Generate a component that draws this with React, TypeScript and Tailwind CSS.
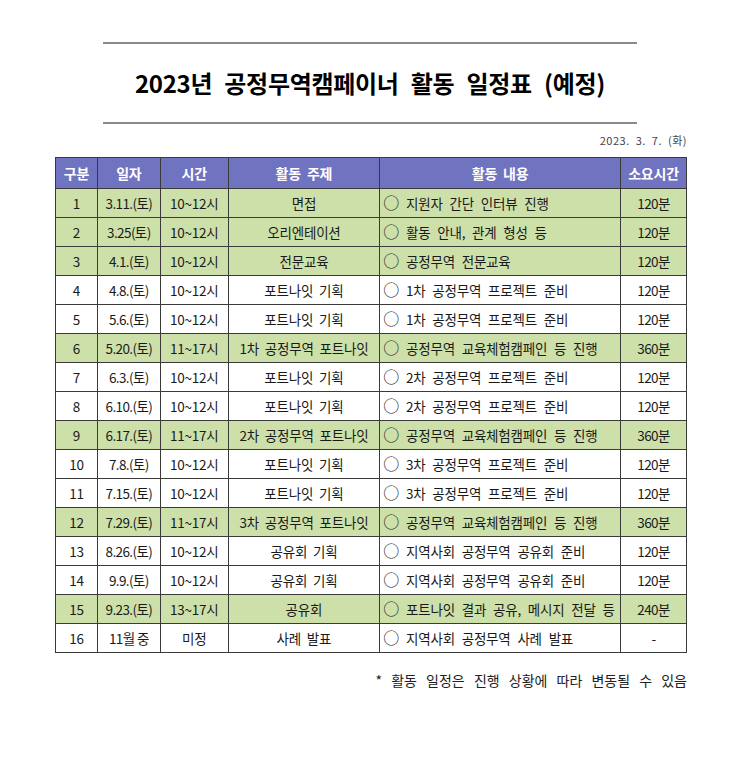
const rows: { no: number; date: string; time: string; topic: string; content: string; dur: string; hl?: boolean }[] = [
  { no: 1, date: "3.11.(토)", time: "10~12시", topic: "면접", content: "지원자 간단 인터뷰 진행", dur: "120분", hl: true },
  { no: 2, date: "3.25(토)", time: "10~12시", topic: "오리엔테이션", content: "활동 안내, 관계 형성 등", dur: "120분", hl: true },
  { no: 3, date: "4.1.(토)", time: "10~12시", topic: "전문교육", content: "공정무역 전문교육", dur: "120분", hl: true },
  { no: 4, date: "4.8.(토)", time: "10~12시", topic: "포트나잇 기획", content: "1차 공정무역 프로젝트 준비", dur: "120분" },
  { no: 5, date: "5.6.(토)", time: "10~12시", topic: "포트나잇 기획", content: "1차 공정무역 프로젝트 준비", dur: "120분" },
  { no: 6, date: "5.20.(토)", time: "11~17시", topic: "1차 공정무역 포트나잇", content: "공정무역 교육체험캠페인 등 진행", dur: "360분", hl: true },
  { no: 7, date: "6.3.(토)", time: "10~12시", topic: "포트나잇 기획", content: "2차 공정무역 프로젝트 준비", dur: "120분" },
  { no: 8, date: "6.10.(토)", time: "10~12시", topic: "포트나잇 기획", content: "2차 공정무역 프로젝트 준비", dur: "120분" },
  { no: 9, date: "6.17.(토)", time: "11~17시", topic: "2차 공정무역 포트나잇", content: "공정무역 교육체험캠페인 등 진행", dur: "360분", hl: true },
  { no: 10, date: "7.8.(토)", time: "10~12시", topic: "포트나잇 기획", content: "3차 공정무역 프로젝트 준비", dur: "120분" },
  { no: 11, date: "7.15.(토)", time: "10~12시", topic: "포트나잇 기획", content: "3차 공정무역 프로젝트 준비", dur: "120분" },
  { no: 12, date: "7.29.(토)", time: "11~17시", topic: "3차 공정무역 포트나잇", content: "공정무역 교육체험캠페인 등 진행", dur: "360분", hl: true },
  { no: 13, date: "8.26.(토)", time: "10~12시", topic: "공유회 기획", content: "지역사회 공정무역 공유회 준비", dur: "120분" },
  { no: 14, date: "9.9.(토)", time: "10~12시", topic: "공유회 기획", content: "지역사회 공정무역 공유회 준비", dur: "120분" },
  { no: 15, date: "9.23.(토)", time: "13~17시", topic: "공유회", content: "포트나잇 결과 공유, 메시지 전달 등", dur: "240분", hl: true },
  { no: 16, date: "11월 중", time: "미정", topic: "사례 발표", content: "지역사회 공정무역 사례 발표", dur: "-" },
];

const font = { fontFamily: '"Noto Sans CJK KR", "Noto Sans", sans-serif' };

export default function App() {
  return (
    <div className="w-[740px] h-[760px] bg-white text-[#111]" style={font}>
      {/* title block */}
      <div className="pt-[42px] px-[103px]">
        <div className="h-[2px] bg-[#8a8a8a]" />
        <h1 className="h-[78px] flex items-center justify-center text-[24px] font-bold tracking-[-0.3px] [word-spacing:7px] text-black">
          2023년 공정무역캠페이너 활동 일정표 (예정)
        </h1>
        <div className="h-[2px] bg-[#8a8a8a]" />
      </div>

      <div className="px-[53px]">
        <div className="h-[33px] flex items-center justify-end text-[11px] text-[#444] tracking-[0.5px] [word-spacing:3px]">
          2023. 3. 7. (화)
        </div>

        <table className="w-[632px] ml-[2px] border-collapse text-[13.5px] tracking-[-0.2px] text-[#1a1a1a]">
          <colgroup>
            <col className="w-[42px]" />
            <col className="w-[63px]" />
            <col className="w-[68px]" />
            <col className="w-[152px]" />
            <col className="w-[241px]" />
            <col className="w-[66px]" />
          </colgroup>
          <thead>
            <tr className="h-[31px] bg-[#7073bf] text-white text-[14px] font-bold">
              {["구분", "일자", "시간", "활동 주제", "활동 내용", "소요시간"].map((h) => (
                <th key={h} className="border border-[#3a3a3a] font-bold [word-spacing:3px]">
                  {h}
                </th>
              ))}
            </tr>
          </thead>
          <tbody>
            {rows.map((r) => (
              <tr key={r.no} className={`h-[29px] ${r.hl ? "bg-[#cde0a9]" : "bg-white"}`}>
                <td className="border border-[#3a3a3a] text-center">{r.no}</td>
                <td className="border border-[#3a3a3a] text-center tracking-[-0.6px]">{r.date}</td>
                <td className="border border-[#3a3a3a] text-center">{r.time}</td>
                <td className="border border-[#3a3a3a] text-center [word-spacing:3px]">{r.topic}</td>
                <td className="border border-[#3a3a3a] pl-[3px] [word-spacing:4px] whitespace-nowrap">
                  <span className="mr-[7px] text-[16px] leading-none">○</span>
                  {r.content}
                </td>
                <td className="border border-[#3a3a3a] text-center tracking-[-0.6px]">{r.dur}</td>
              </tr>
            ))}
          </tbody>
        </table>

        <div className="w-[634px] pt-[17px] text-right text-[14px] text-[#222] [word-spacing:6px]">
          * 활동 일정은 진행 상황에 따라 변동될 수 있음
        </div>
      </div>
    </div>
  );
}
